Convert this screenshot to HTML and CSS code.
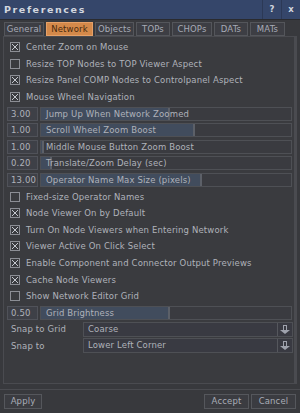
FILE: index.html
```html
<!DOCTYPE html>
<html lang="en">
<head>
    <meta charset="UTF-8">
    <title>Preferences</title>
    <link rel="stylesheet" href="styles.css">
</head>
<body>

<div class="titlebar">
    <span class="title">Preferences</span>
    <span class="title-btn">?</span>
    <span class="title-btn">x</span>
</div>

<div class="tabs">
    <span class="tab w40">General</span>
    <span class="tab w47 active">Network</span>
    <span class="tab w39">Objects</span>
    <span class="tab w34">TOPs</span>
    <span class="tab w40">CHOPs</span>
    <span class="tab w34">DATs</span>
    <span class="tab w35">MATs</span>
</div>

<div class="panel">
    <div class="row"><span class="check on"></span>Center Zoom on Mouse</div>
    <div class="row"><span class="check"></span>Resize TOP Nodes to TOP Viewer Aspect</div>
    <div class="row"><span class="check on"></span>Resize Panel COMP Nodes to Controlpanel Aspect</div>
    <div class="row"><span class="check on"></span>Mouse Wheel Navigation</div>

    <div class="row slider-row">
        <span class="num">3.00</span>
        <span class="track"><span class="fill" style="width: 127px"></span><span class="label">Jump Up When Network Zoomed</span></span>
    </div>
    <div class="row slider-row">
        <span class="num">1.00</span>
        <span class="track"><span class="fill" style="width: 152px"></span><span class="label">Scroll Wheel Zoom Boost</span></span>
    </div>
    <div class="row slider-row">
        <span class="num">1.00</span>
        <span class="track"><span class="fill" style="width: 1px"></span><span class="label">Middle Mouse Button Zoom Boost</span></span>
    </div>
    <div class="row slider-row">
        <span class="num">0.20</span>
        <span class="track"><span class="fill" style="width: 9px"></span><span class="label">Translate/Zoom Delay (sec)</span></span>
    </div>
    <div class="row slider-row">
        <span class="num">13.00</span>
        <span class="track"><span class="fill" style="width: 159px"></span><span class="label">Operator Name Max Size (pixels)</span></span>
    </div>

    <div class="row"><span class="check"></span>Fixed-size Operator Names</div>
    <div class="row"><span class="check on"></span>Node Viewer On by Default</div>
    <div class="row"><span class="check on"></span>Turn On Node Viewers when Entering Network</div>
    <div class="row"><span class="check on"></span>Viewer Active On Click Select</div>
    <div class="row"><span class="check on"></span>Enable Component and Connector Output Previews</div>
    <div class="row"><span class="check on"></span>Cache Node Viewers</div>
    <div class="row"><span class="check"></span>Show Network Editor Grid</div>

    <div class="row slider-row">
        <span class="num">0.50</span>
        <span class="track"><span class="fill" style="width: 127px"></span><span class="label">Grid Brightness</span></span>
    </div>

    <div class="row menu-row">
        <span class="menu-label">Snap to Grid</span>
        <span class="menu"><span class="menu-value">Coarse</span><span class="arrow"></span></span>
    </div>
    <div class="row menu-row">
        <span class="menu-label">Snap to</span>
        <span class="menu"><span class="menu-value">Lower Left Corner</span><span class="arrow"></span></span>
    </div>
</div>

<div class="buttons">
    <span class="btn apply">Apply</span>
    <span class="spacer"></span>
    <span class="btn">Accept</span>
    <span class="btn">Cancel</span>
</div>

</body>
</html>
```

FILE: styles.css
```css
body {
    margin: 0;
    width: 300px;
    height: 413px;
    background-color: #38393d;
    font-family: "DejaVu Sans", Verdana, sans-serif;
    font-size: 8.5px;
    letter-spacing: 0.15px;
    color: #afb2ba;
    overflow: hidden;
}

.titlebar {
    display: flex;
    align-items: stretch;
    height: 20px;
    background-color: #35466a;
    border-bottom: 1px solid #2a2b2f;
    box-sizing: border-box;
}

.title {
    flex: 1;
    padding-left: 4px;
    line-height: 19px;
    font-weight: bold;
    font-size: 9.5px;
    letter-spacing: 1.6px;
    color: #d2d6df;
}

.title-btn {
    width: 18px;
    text-align: center;
    line-height: 19px;
    font-weight: bold;
    color: #d2d6df;
    border-left: 1px solid #2c3956;
}

.tabs {
    display: flex;
    gap: 2px;
    padding: 2px 4px 0;
    height: 16px;
    box-sizing: border-box;
}

.tab {
    height: 14px;
    line-height: 13px;
    text-align: center;
    box-sizing: border-box;
    border: 1px solid #54565b;
    background-color: #3d3e44;
    color: #a7abb6;
}

.w34 { width: 34px; }
.w35 { width: 35px; }
.w39 { width: 39px; }
.w40 { width: 40px; }
.w47 { width: 47px; }

.tab.active {
    background-color: #d4894a;
    border-color: #e6a168;
    color: #4a2a0e;
}

.panel {
    margin: 0 3px;
    height: 348px;
    padding-top: 2px;
    box-sizing: border-box;
    border: 1px solid #4a4b50;
    border-right-width: 3px;
    background-color: #3a3b3f;
}

.row {
    display: flex;
    align-items: center;
    height: 16.6px;
    padding-left: 6px;
}

.check {
    width: 10px;
    height: 10px;
    margin-right: 6px;
    box-sizing: border-box;
    border: 1px solid #8c8e95;
    flex-shrink: 0;
}

.check.on {
    background:
        linear-gradient(45deg, transparent 42%, #c4c7ce 42%, #c4c7ce 58%, transparent 58%),
        linear-gradient(-45deg, transparent 42%, #c4c7ce 42%, #c4c7ce 58%, transparent 58%);
    background-size: 6px 6px;
    background-position: 1px 1px;
    background-repeat: no-repeat;
}

.slider-row {
    padding-left: 3px;
    gap: 2px;
}

.num {
    width: 31px;
    height: 14px;
    line-height: 13px;
    padding-left: 3px;
    box-sizing: border-box;
    border: 1px solid #505259;
    background-color: #3e4047;
}

.track {
    position: relative;
    width: 252px;
    height: 14px;
    box-sizing: border-box;
    border: 1px solid #4e5055;
    background-color: #3a3b40;
}

.fill {
    position: absolute;
    left: 0;
    top: 0;
    bottom: 0;
    background-color: #414c5d;
    border-right: 2px solid #5c6068;
}

.label {
    position: absolute;
    left: 5px;
    top: 0;
    line-height: 12px;
    white-space: nowrap;
}

.menu-row {
    padding-left: 7px;
}

.menu-label {
    width: 72px;
}

.menu {
    display: flex;
    width: 210px;
    height: 15px;
    box-sizing: border-box;
    border: 1px solid #4e5055;
    background-color: #393a42;
}

.menu-value {
    flex: 1;
    padding-left: 4px;
    line-height: 13px;
}

.arrow {
    position: relative;
    width: 14px;
    border-left: 1px solid #55575d;
}

.arrow::before {
    content: "";
    position: absolute;
    left: 5px;
    top: 2px;
    width: 2px;
    height: 5px;
    border: 1px solid #9fa3ad;
    border-bottom: none;
}

.arrow::after {
    content: "";
    position: absolute;
    left: 2px;
    top: 7px;
    border-left: 5px solid transparent;
    border-right: 5px solid transparent;
    border-top: 4px solid #9fa3ad;
}

.buttons {
    display: flex;
    gap: 2px;
    margin-top: 5px;
    padding: 4px 4px 0;
    border-top: 1px solid #4a4b50;
}

.spacer {
    flex: 1;
}

.btn {
    width: 45px;
    height: 15px;
    line-height: 13px;
    text-align: center;
    box-sizing: border-box;
    border: 1px solid #55575c;
    background-color: #3b3c41;
    color: #a9adb7;
}

.btn.apply {
    width: 38px;
}
```
